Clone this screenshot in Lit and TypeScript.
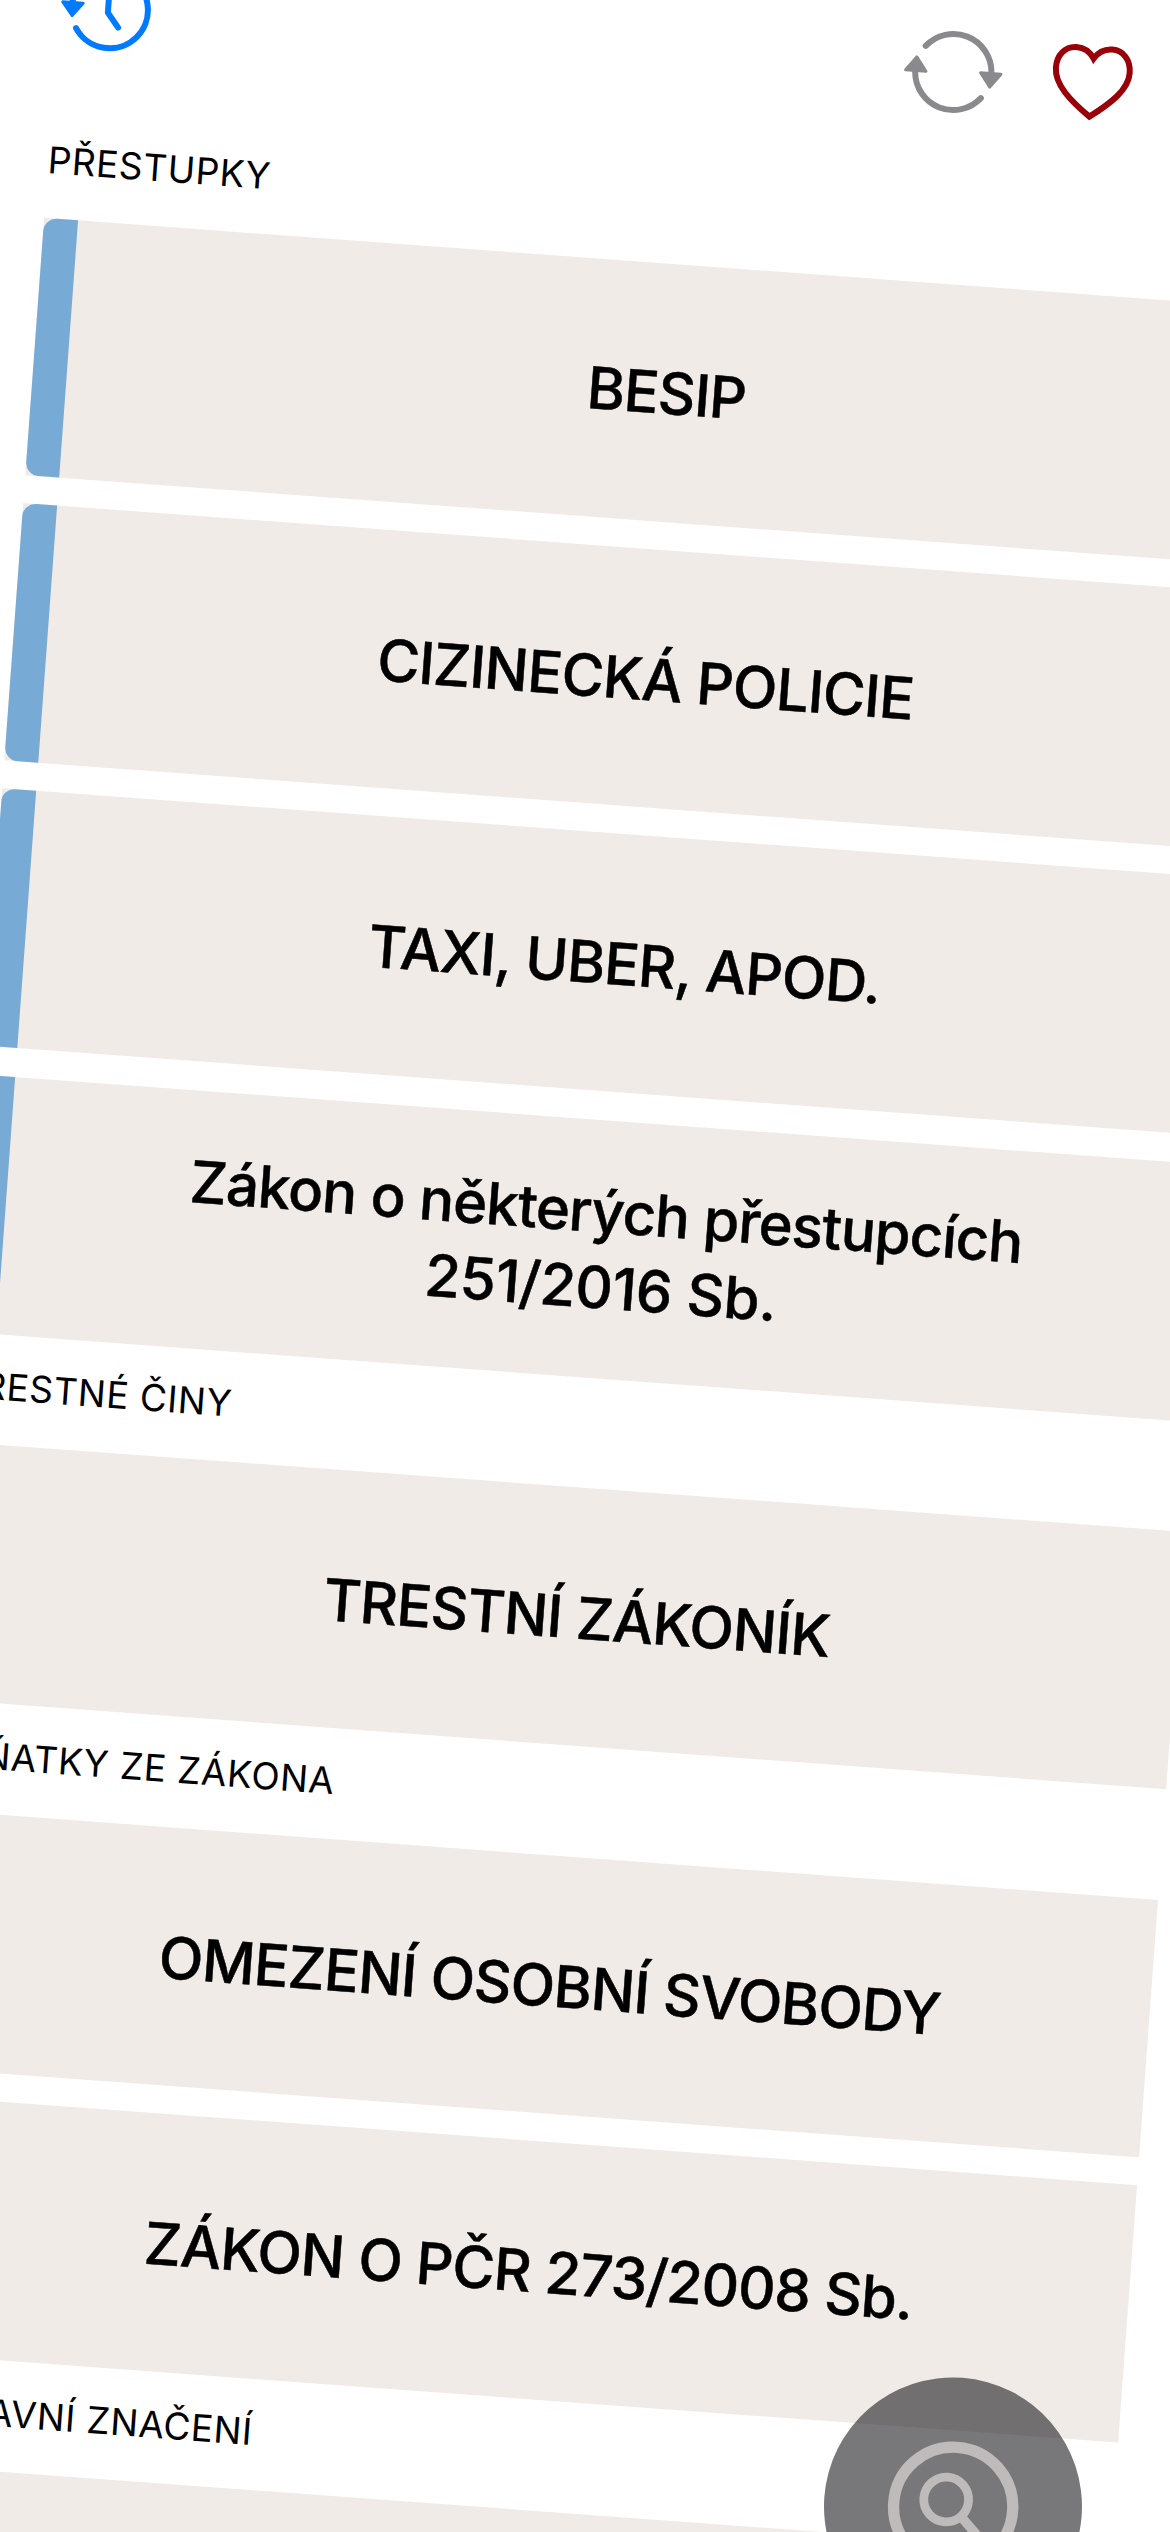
import { LitElement, html, svg, css } from "lit";
import { customElement, property } from "lit/decorators.js";

interface Section {
  title: string;
  items: string[][];
}

const SECTIONS: Section[] = [
  {
    title: "PŘESTUPKY",
    items: [
      ["BESIP"],
      ["CIZINECKÁ POLICIE"],
      ["TAXI, UBER, APOD."],
      ["Zákon o některých přestupcích", "251/2016 Sb."],
    ],
  },
  { title: "TRESTNÉ ČINY", items: [["TRESTNÍ ZÁKONÍK"]] },
  {
    title: "VÝŇATKY ZE ZÁKONA",
    items: [["OMEZENÍ OSOBNÍ SVOBODY"], ["ZÁKON O PČR 273/2008 Sb."]],
  },
  { title: "DOPRAVNÍ ZNAČENÍ", items: [[""]] },
];

const historyIcon = svg`
  <path class="line" d="M-32.1 20.5A38.2 38.2 0 1 0 -37.6 -6" />
  <path class="line" d="M-1.5 -21V2.7L9.8 16.9" />
  <path class="solid" d="M-47.2 -4.8H-26.8L-37 8.2Z" />`;

const syncIcon = svg`
  <path class="line" d="M-29.4 -24A38 38 0 0 1 38 -3" />
  <path class="solid" d="M27.3 -1.3H47.7L37.5 12.4Z" />
  <path class="line" d="M29.4 24A38 38 0 0 1 -38 3" />
  <path class="solid" d="M-27.3 1.3H-47.7L-37.5 -12.4Z" />`;

const heartIcon = svg`
  <path class="line" d="M-1 -23.7C-5 -30 -11 -34 -19 -34C-30 -34 -38 -25 -38 -12C-38 5 -21 20 -1 34.5C19 20 36 5 36 -12C36 -25 28 -34 17 -34C9 -34 3 -30 -1 -23.7Z" />`;

@customElement("law-card")
export class LawCard extends LitElement {
  @property({ attribute: false }) lines: string[] = [];

  static styles = css`
    :host {
      display: flex;
      height: 258px;
      background: #f0ebe7;
    }
    .bar {
      width: 34px;
      background: #78aad6;
      border-radius: 13px 0 0 13px;
    }
    .label {
      flex: 1;
      display: flex;
      flex-direction: column;
      justify-content: center;
      padding-top: 2.5px;
      text-align: center;
      font-size: 58px;
      font-weight: 500;
      line-height: 75.5px;
      letter-spacing: -0.9px;
      white-space: nowrap;
      -webkit-text-stroke: 0.5px currentColor;
    }
    .label span + span {
      letter-spacing: -0.4px;
    }
  `;

  render() {
    return html`
      <div class="bar"></div>
      <div class="label">${this.lines.map((l) => html`<span>${l}</span>`)}</div>
    `;
  }
}

@customElement("app-root")
export class AppRoot extends LitElement {
  static styles = css`
    :host {
      display: block;
      width: 1170px;
      height: 2532px;
      overflow: hidden;
      position: relative;
      background: #fff;
      color: #000;
      font-family: Inter, "Liberation Sans", sans-serif;
    }
    .stage {
      position: relative;
      width: 1353px;
      box-sizing: border-box;
      padding: 0 59.5px;
      transform-origin: 0 0;
      transform: rotate(4.2deg) translateY(-48px);
    }
    .toolbar {
      display: flex;
      align-items: center;
      height: 100px;
      padding-right: 148px;
    }
    .icon {
      width: 100px;
      height: 100px;
      overflow: visible;
      flex: none;
    }
    .spacer {
      flex: 1;
    }
    .heart {
      margin-left: 40px;
    }
    .line {
      fill: none;
      stroke: currentColor;
      stroke-width: 6;
      stroke-linecap: round;
      stroke-linejoin: round;
    }
    .solid {
      fill: currentColor;
      stroke: currentColor;
      stroke-width: 3;
      stroke-linejoin: round;
    }
    .heart .line {
      stroke-linejoin: miter;
    }
    .blue {
      color: #007aff;
    }
    .gray {
      color: #8a8a8e;
    }
    .red {
      color: #9a0007;
    }
    .title {
      height: 110.8px;
      box-sizing: border-box;
      padding-top: 29.5px;
      font-size: 37px;
      line-height: 45px;
      letter-spacing: 0.55px;
      white-space: nowrap;
    }
    .first {
      padding-top: 51.2px;
    }
    .cards {
      display: flex;
      flex-direction: column;
      gap: 28.2px;
    }
    .fab {
      position: absolute;
      left: 1004.7px;
      top: 2349px;
      width: 258.4px;
      height: 258.4px;
      border-radius: 50%;
      background: rgba(0, 0, 4, 0.53);
    }
    .lens {
      width: 100%;
      height: 100%;
      display: block;
      fill: none;
      stroke: #bfbbba;
    }
  `;

  render() {
    return html`
      <div class="stage">
        <div class="toolbar">
          <svg class="icon blue" viewBox="-50 -50 100 100">${historyIcon}</svg>
          <div class="spacer"></div>
          <svg class="icon gray" viewBox="-50 -50 100 100">${syncIcon}</svg>
          <svg class="icon heart red" viewBox="-50 -50 100 100">${heartIcon}</svg>
        </div>
        ${SECTIONS.map(
          (s, i) => html`
            <section class=${i === 0 ? "first" : ""}>
              <div class="title">${s.title}</div>
              <div class="cards">
                ${s.items.map((lines) => html`<law-card .lines=${lines}></law-card>`)}
              </div>
            </section>
          `
        )}
        <div class="fab">
          <svg class="lens" viewBox="-129.2 -129.2 258.4 258.4">
            <circle r="59.6" stroke-width="11.3" />
            <circle cx="-7.5" cy="-6.7" r="22.4" stroke-width="8.8" />
            <path d="M8.3 9.1L34 34.8" stroke-width="9.5" />
          </svg>
        </div>
      </div>
    `;
  }
}
